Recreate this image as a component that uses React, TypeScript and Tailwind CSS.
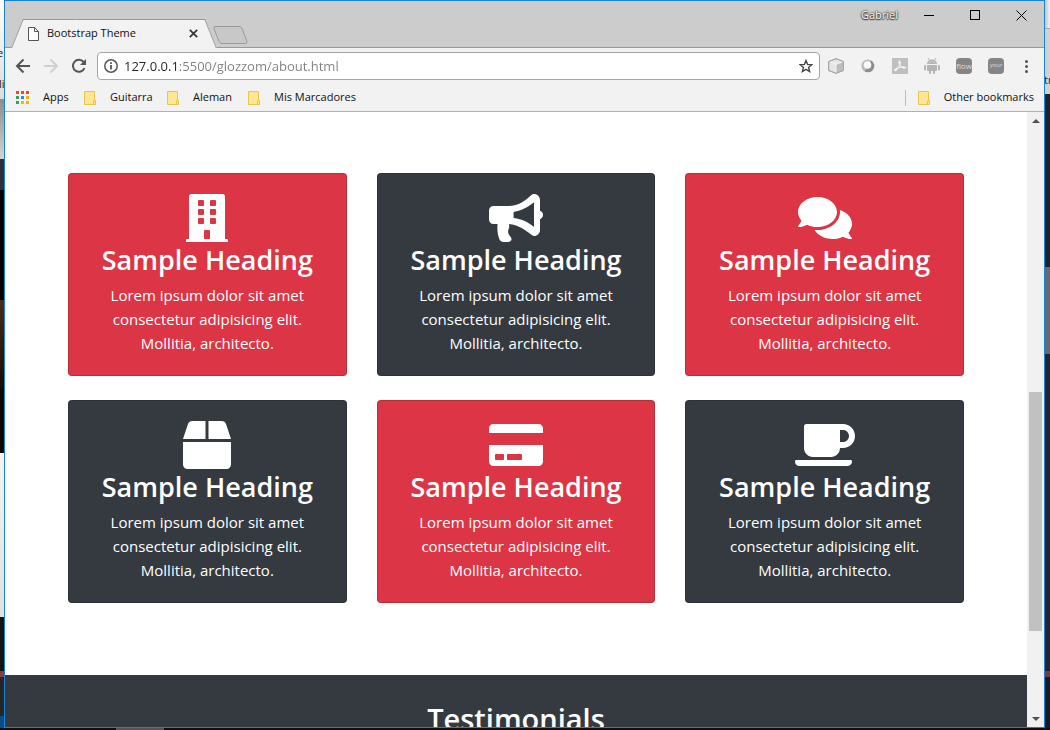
import React from "react";
import { FaBuilding, FaBox, FaCoffee, FaComments, FaCreditCard } from "react-icons/fa";

type Tone = "red" | "dark";

function Bullhorn() {
  return (
    <svg viewBox="0 0 576 512" className="h-12 w-[54px]" fill="currentColor" aria-hidden="true">
      <path
        fillRule="evenodd"
        d="M576 224c0-20.9-13.4-38.7-32-45.3V64c0-35.3-28.7-64-64-64-12 0-20 4-28 11C390 68 320 128 208 128H48c-26.500 0-48 21.500-48 48v96c0 26.500 21.500 48 48 48h43.300c-6 70 2 116 18.700 159.300C117.500 499 135 512 155 512h49c33 0 48-32 26-56-24-26-34-54-20-84 8-18 8-34 2-51 100 8 168 62 240 114 8 7 18 13 28 13 35.300 0 64-28.700 64-64V269.300c18.600-6.600 32-24.400 32-45.300zm-96 129c-62-50-126-86-218-96v-66c92-12 156-52 218-102v264z"
      />
    </svg>
  );
}

const cards: { icon: React.ReactNode; tone: Tone }[] = [
  { icon: <FaBuilding className="h-12 w-[42px]" />, tone: "red" },
  { icon: <Bullhorn />, tone: "dark" },
  { icon: <FaComments className="h-12 w-[54px]" />, tone: "red" },
  { icon: <FaBox className="size-12" />, tone: "dark" },
  { icon: <FaCreditCard className="h-12 w-[54px]" />, tone: "red" },
  { icon: <FaCoffee className="h-12 w-[60px]" />, tone: "dark" },
];

function Card({ icon, tone }: { icon: React.ReactNode; tone: Tone }) {
  return (
    <article
      className={
        "flex flex-col items-center rounded border border-black/15 p-5 text-center text-white " +
        (tone === "red" ? "bg-[#dc3545]" : "bg-[#343a40]")
      }
    >
      {icon}
      <h3 className="mb-[6px] text-[27px] leading-[35px] font-semibold whitespace-nowrap">Sample Heading</h3>
      <p className="text-[15px] leading-6">
        Lorem ipsum dolor sit amet
        <br />
        consectetur adipisicing elit.
        <br />
        Mollitia, architecto.
      </p>
    </article>
  );
}

function Folder() {
  return (
    <svg viewBox="0 0 13 14" className="h-[14px] w-[13px] shrink-0" aria-hidden="true">
      <path d="M.5.5h10v9h1v4H.5z" fill="#ffe694" stroke="#e8c64b" />
      <path d="M9.500 13.500v-3.500h2" fill="none" stroke="#e8c64b" />
    </svg>
  );
}

function Bookmark({ label, width }: { label: string; width: string }) {
  return (
    <a href="#" className={"flex items-center gap-[13px] whitespace-nowrap " + width}>
      <Folder />
      {label}
    </a>
  );
}

function TitleBar() {
  return (
    <header className="flex h-[47px] shrink-0 border-b border-[#999] bg-[#ccc]">
      <div className="relative -mb-px ml-3 flex h-[29px] w-[194px] items-center self-end before:absolute before:inset-y-0 before:left-0 before:w-2/3 before:-skew-x-[22deg] before:border-t before:border-l before:border-[#999] before:bg-[#f2f2f2] after:absolute after:inset-y-0 after:right-0 after:w-2/3 after:skew-x-[22deg] after:border-t after:border-r after:border-[#999] after:bg-[#f2f2f2]">
        <div className="relative z-10 flex w-full items-center pr-[10px] pl-[11px]">
          <svg viewBox="0 0 11 14" className="h-[14px] w-[11px]" fill="#fff" stroke="#555" aria-hidden="true">
            <path d="M.5.5h6l4 4v9H.5z" />
            <path d="M6.500.500v4h4" fill="none" />
          </svg>
          <span className="ml-2 flex-1 text-[11px] whitespace-nowrap">Bootstrap Theme</span>
          <button aria-label="Close tab" className="flex size-4 items-center justify-center">
            <svg viewBox="0 0 9 9" className="size-[9px]" stroke="#333" strokeWidth="1.7" aria-hidden="true">
              <path d="M.8.8l7.400 7.400M8.200.8L.8 8.200" />
            </svg>
          </button>
        </div>
      </div>
      <button aria-label="New tab" className="ml-[2px] flex items-end pb-[3px]">
        <svg viewBox="0 0 35 18" className="h-[18px] w-[35px]" fill="#c8c8c8" stroke="#999" aria-hidden="true">
          <path d="M2 .5h24q2 0 3 2l5 13q.5 2-2 2H9q-2 0-3-2L1 2.500Q.5.500 2 .5z" />
        </svg>
      </button>
      <div className="ml-auto flex h-7 items-center">
        <span className="mr-2 text-[11px] text-white [text-shadow:0_0_2px_#333,0_0_2px_#333,0_1px_1px_#333]">Gabriel</span>
        <button aria-label="Minimize" className="flex h-7 w-[46px] items-center justify-center">
          <span className="h-px w-[10px] bg-black" />
        </button>
        <button aria-label="Maximize" className="flex h-7 w-[46px] items-center justify-center">
          <span className="size-[10px] border border-black" />
        </button>
        <button aria-label="Close" className="flex h-7 w-[46px] items-center justify-center">
          <svg viewBox="0 0 11 11" className="size-[11px]" stroke="#000" aria-hidden="true">
            <path d="M.5.5l10 10M10.500.5l-10 10" />
          </svg>
        </button>
      </div>
    </header>
  );
}

function Extensions() {
  return (
    <div className="flex items-center">
      <button aria-label="Cube" className="flex w-8 justify-center">
        <svg viewBox="0 0 16 16" className="size-4" stroke="#a5a5a5" strokeLinejoin="round" aria-hidden="true">
          <path d="M8 .7l7.300 2.800v9L8 15.300.7 12.500v-9z" fill="#e6e6e6" />
          <path d="M8 6.300l7-2.600v8.600L8 15z" fill="#bdbdbd" stroke="none" />
          <path d="M1 3.600L8 6.300l7-2.700M8 6.300v8.700" fill="none" stroke="#f5f5f5" />
          <path d="M8 .7l7.300 2.800v9L8 15.300.7 12.500v-9z" fill="none" />
        </svg>
      </button>
      <button aria-label="Lens" className="flex w-8 justify-center">
        <svg viewBox="0 0 14 14" className="size-[14px]" aria-hidden="true">
          <circle cx="7" cy="7" r="6.300" fill="#8d8d8d" />
          <path d="M1 6a6 6 0 0 1 9-4.500L4 12A6 6 0 0 1 1 6z" fill="#bbb" />
          <circle cx="6.500" cy="6" r="3.800" fill="#fafafa" />
        </svg>
      </button>
      <button aria-label="PDF" className="flex w-8 justify-center">
        <svg viewBox="0 0 16 16" className="size-4" aria-hidden="true">
          <path d="M0 0h16v16H0z" fill="#bfbfbf" />
          <path
            d="M3 12.500c-1-.5 1-2 3-2.500 1.500-2 2.500-5 2-6.500-.3-1-1.500-.6-1 1C7.500 7 9 9 11 10c2 .3 2.500 0 2.300-.7C12 8.500 8 9 6 10c-1 1.500-2.300 3-3 2.500z"
            fill="none"
            stroke="#f5f5f5"
            strokeWidth="1.100"
          />
        </svg>
      </button>
      <button aria-label="Android" className="flex w-8 justify-center">
        <svg viewBox="0 0 16 16" className="size-4" fill="#b5b5b5" aria-hidden="true">
          <path d="M3 6a5 4.500 0 0 1 10 0zM3 7h10v6H3z" />
          <rect x="0" y="7" width="2" height="5.500" rx="1" />
          <rect x="14" y="7" width="2" height="5.500" rx="1" />
          <rect x="5" y="12" width="2" height="4" rx="1" />
          <rect x="9" y="12" width="2" height="4" rx="1" />
          <path d="M4 0l2 3M12 0l-2 3" stroke="#b5b5b5" />
          <path d="M5.500 4h1M9.500 4h1" stroke="#f2f2f2" />
        </svg>
      </button>
      <button className="flex w-8 justify-center">
        <span className="flex size-4 items-center justify-center rounded-sm bg-[#858585] text-[8px] leading-none text-[#ddd]">
          flow
        </span>
      </button>
      <button className="flex w-8 justify-center">
        <span className="flex size-4 items-start justify-center rounded-sm bg-[#858585] pt-1 text-[6px] leading-none text-[#ddd]">
          your
        </span>
      </button>
      <button aria-label="Menu" className="flex w-[29px] flex-col items-center gap-[2px]">
        <span className="size-[3px] rounded-full bg-[#555]" />
        <span className="size-[3px] rounded-full bg-[#555]" />
        <span className="size-[3px] rounded-full bg-[#555]" />
      </button>
    </div>
  );
}

function Toolbar() {
  return (
    <div className="flex h-9 shrink-0 items-center bg-[#f2f2f2] pr-[3px]">
      <nav className="flex w-[92px] items-center gap-3 pl-[10px]">
        <button aria-label="Back">
          <svg viewBox="0 0 16 16" className="size-4" fill="none" stroke="#555" strokeWidth="2" aria-hidden="true">
            <path d="M15 8H2.500M8.500 1.500L2 8l6.500 6.500" />
          </svg>
        </button>
        <button aria-label="Forward">
          <svg viewBox="0 0 16 16" className="size-4" fill="none" stroke="#d0d0d0" strokeWidth="2" aria-hidden="true">
            <path d="M1 8h12.500M7.500 1.500L14 8l-6.500 6.500" />
          </svg>
        </button>
        <button aria-label="Reload">
          <svg viewBox="0 0 16 16" className="size-4" fill="none" stroke="#555" strokeWidth="2" aria-hidden="true">
            <path d="M13.500 10A6 6 0 1 1 12.600 4" />
            <path d="M15 1v6H9z" fill="#555" stroke="none" />
          </svg>
        </button>
      </nav>
      <div className="flex h-7 flex-1 items-center rounded-sm border border-[#a6a6a6] bg-white pr-[6px] pl-[6px]">
        <svg viewBox="0 0 14 14" className="size-[14px] shrink-0" fill="none" stroke="#555" aria-hidden="true">
          <circle cx="7" cy="7" r="6.200" strokeWidth="1.500" />
          <path d="M7 6v4.500M7 3.300v1.700" strokeWidth="1.800" />
        </svg>
        <input
          type="text"
          aria-label="Address"
          defaultValue="127.0.0.1:5500/glozzom/about.html"
          className="ml-[6px] h-6 min-w-0 flex-1 bg-[linear-gradient(to_right,#222_53px,#808080_53px)] bg-clip-text text-[13px] text-transparent outline-none"
        />
        <button aria-label="Bookmark this page">
          <svg viewBox="0 0 14 14" className="size-[14px]" fill="none" stroke="#444" strokeWidth="1.400" aria-hidden="true">
            <path d="M7 1.500l1.600 3.900 4.200.3-3.200 2.700 1 4.100L7 10.300l-3.600 2.200 1-4.100L1.200 5.700l4.200-.3z" />
          </svg>
        </button>
      </div>
      <Extensions />
    </div>
  );
}

const appDots = [
  "bg-[#f44336]", "bg-[#f44336]", "bg-[#f44336]",
  "bg-[#34a060]", "bg-[#2b87e8]", "bg-[#f4b400]",
  "bg-[#34a060]", "bg-[#f4b400]", "bg-[#f4b400]",
];

function BookmarksBar() {
  return (
    <nav className="flex h-7 shrink-0 items-center border-b border-[#b0b0b0] bg-[#f2f2f2] pr-[10px] pl-[11px] text-[11px]">
      <a href="#" className="flex w-[68px] items-center gap-[14px]">
        <span className="grid grid-cols-3 gap-[2px]">
          {appDots.map((dot, i) => (
            <span key={i} className={"size-[3px] " + dot} />
          ))}
        </span>
        Apps
      </a>
      <Bookmark label="Guitarra" width="w-[83px]" />
      <Bookmark label="Aleman" width="w-[81px]" />
      <Bookmark label="Mis Marcadores" width="w-[120px]" />
      <div className="ml-auto flex h-4 items-center border-l border-[#bbb] pl-3">
        <Bookmark label="Other bookmarks" width="w-auto" />
      </div>
    </nav>
  );
}

function ScrollBar() {
  return (
    <div className="flex w-[17px] shrink-0 flex-col items-center bg-[#f1f1f1]" aria-hidden="true">
      <svg viewBox="0 0 17 17" className="size-[17px] shrink-0" fill="#505050">
        <path d="M5 11h8L9 7z" />
      </svg>
      <div className="flex w-[13px] flex-1 flex-col">
        <div className="grow-[263]" />
        <div className="grow-[240] bg-[#c1c1c1]" />
        <div className="grow-[79]" />
      </div>
      <svg viewBox="0 0 17 17" className="size-[17px] shrink-0" fill="#505050">
        <path d="M5 7h8l-4 4z" />
      </svg>
    </div>
  );
}

function LeftEdge() {
  return (
    <div className="flex w-1 shrink-0 flex-col overflow-hidden text-[11px] text-[#222]" aria-hidden="true">
      <div className="flex min-h-0 grow-[93] basis-0 flex-col justify-end gap-[15px] bg-linear-to-b from-white to-[#dcdcdc] pb-[7px] leading-4">
        <span className="-ml-[3px]">e</span>
        <span className="-ml-px">li</span>
      </div>
      <div className="grow-[60] basis-0 bg-linear-to-b from-[#8c8c8c] to-[#d4d4d4]" />
      <div className="grow-[32] basis-0 bg-[#2b303c]" />
      <div className="grow-[110] basis-0 bg-[#020202]" />
      <div className="grow-[90] basis-0 bg-linear-to-b from-[#4a2c1a] to-[#150d05]" />
      <div className="grow-[65] basis-0 bg-[#0c0804]" />
      <div className="grow-[165] basis-0 bg-linear-to-b from-[#f4f4f4] to-[#e0e0e0]" />
      <div className="grow-[55] basis-0 bg-[#141414]" />
      <div className="grow-[6] basis-0 bg-[#8c3a3e]" />
      <div className="grow-[39] basis-0 bg-[#252525]" />
      <div className="grow-[12] basis-0 bg-[#0a4c85]" />
    </div>
  );
}

function RightEdge() {
  return (
    <div className="flex w-[5px] shrink-0 flex-col overflow-hidden text-[11px] text-[#222]" aria-hidden="true">
      <div className="grow-[28] basis-0 bg-linear-to-r from-[#c4c4c4] to-[#f4f4f4]" />
      <div className="flex min-h-0 grow-[65] basis-0 flex-col justify-end border-t border-[#aaa] bg-[#d2d2d2]">
        <span className="-ml-px leading-7">tr</span>
      </div>
      <div className="grow-[173] basis-0 bg-[#1b232c]" />
      <div className="grow-[87] basis-0 bg-[#666970]" />
      <div className="grow-[317] basis-0 bg-[#1d272e]" />
      <div className="grow-[6] basis-0 bg-[#7e373c]" />
      <div className="grow-[51] basis-0 bg-[#171c21]" />
    </div>
  );
}

export default function App() {
  return (
    <div className="flex h-screen flex-col overflow-hidden bg-[#0d100c] font-['Open_Sans','Noto_Sans',sans-serif] text-[#111]">
      <div className="flex min-h-0 flex-1">
        <LeftEdge />
        <div className="flex min-w-0 flex-1 flex-col border border-[#1883d7]">
          <TitleBar />
          <Toolbar />
          <BookmarksBar />
          <div className="flex min-h-0 flex-1">
            <main className="min-w-0 flex-1 overflow-hidden bg-white">
              <section className="grid grid-cols-3 gap-x-[30px] gap-y-6 px-[63px] pt-[61px] pb-[72px]">
                {cards.map((card, i) => (
                  <Card key={i} icon={card.icon} tone={card.tone} />
                ))}
              </section>
              <section className="bg-[#343a40] pt-6 pb-12 text-center text-white">
                <h2 className="text-[29px] leading-10 font-semibold">Testimonials</h2>
              </section>
            </main>
            <ScrollBar />
          </div>
        </div>
        <RightEdge />
      </div>
      <div className="flex h-[2px] shrink-0">
        <div className="ml-[11%] w-12 bg-[#555]" />
      </div>
    </div>
  );
}
